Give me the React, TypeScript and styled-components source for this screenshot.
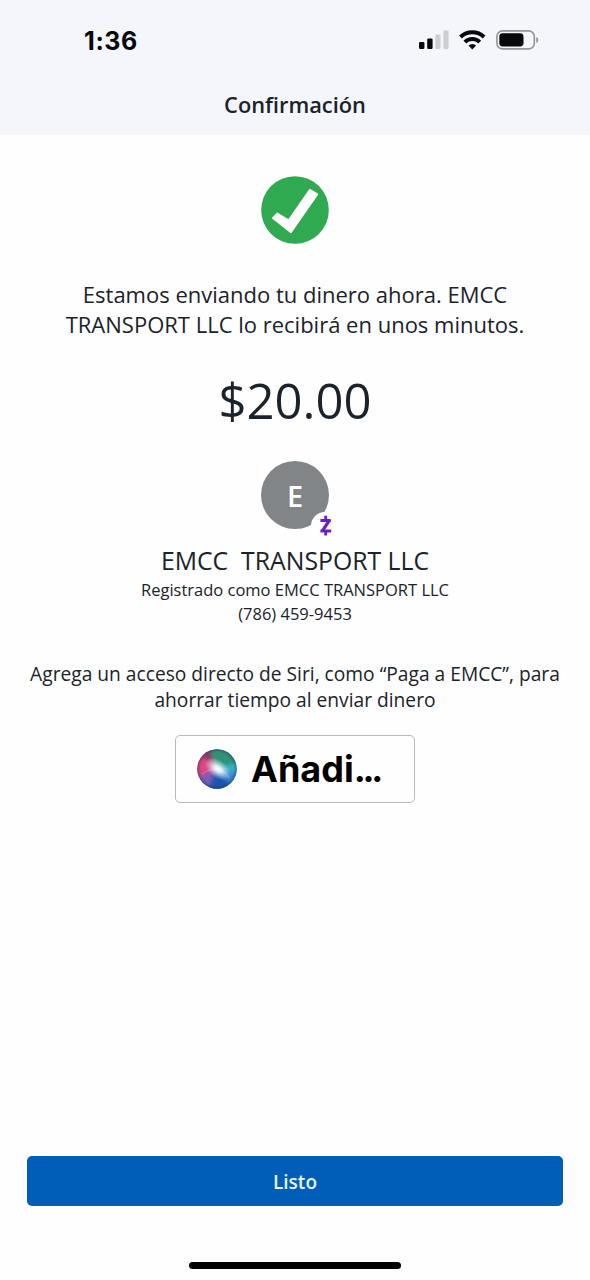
import styled, { createGlobalStyle } from "styled-components";

const GlobalStyle = createGlobalStyle`
	* {
		box-sizing: border-box;
	}
	body {
		margin: 0;
		background: #fff;
		font-family: "Open Sans", "Noto Sans", sans-serif;
		color: #1b2229;
	}
`;

const Screen = styled.div`
	display: flex;
	flex-direction: column;
	width: 590px;
	height: 1280px;
	background: #fefefe;
	overflow: hidden;
`;

const Header = styled.header`
	height: 135px;
	background: #f4f6fb;
`;

const StatusBar = styled.div`
	display: flex;
	align-items: center;
	justify-content: space-between;
	height: 80px;
	padding: 0 50px 0 84px;
`;

const Time = styled.span`
	padding-top: 1px;
	font-family: Inter, sans-serif;
	font-size: 25px;
	font-weight: 700;
	letter-spacing: 0.6px;
	color: #08090b;
`;

const Title = styled.h1`
	margin: 0;
	font-size: 21.8px;
	font-weight: 600;
	line-height: 49px;
	text-align: center;
`;

const Main = styled.main`
	flex: 1;
	display: flex;
	flex-direction: column;
	align-items: center;
	padding-top: 41px;
`;

// one centered block of copy, sized per use
const Text = styled.p<{
	$size: number;
	$line: number;
	$top?: number;
}>`
	margin: ${({ $top }) => $top || 0}px 0 0;
	font-size: ${({ $size }) => $size}px;
	line-height: ${({ $line }) => $line}px;
	text-align: center;
	white-space: pre;
`;

const Avatar = styled.div`
	position: relative;
	display: flex;
	align-items: center;
	justify-content: center;
	width: 68px;
	height: 68px;
	margin-top: 31px;
	border-radius: 50%;
	background: #818587;
	color: #fff;
	font-size: 29px;
	font-weight: 600;
`;

const ZelleBadge = styled.span`
	position: absolute;
	right: -10px;
	bottom: -11px;
	width: 28px;
	height: 28px;
	border-radius: 50%;
	background: #fefefe;

	svg {
		display: block;
	}
`;

const SiriButton = styled.button`
	display: flex;
	align-items: center;
	gap: 14px;
	width: 240px;
	height: 68px;
	margin-top: 22px;
	padding: 0 0 0 21px;
	border: 1.5px solid #b9b9ba;
	border-radius: 5px;
	background: #fefefe;
	color: #000;
	font-family: Inter, sans-serif;
	font-size: 36px;
	font-weight: 700;
`;

const Dots = styled.span`
	letter-spacing: -3.2px;
`;

const Footer = styled.footer`
	display: flex;
	flex-direction: column;
	align-items: center;
	padding: 0 27px 11px;
`;

const DoneButton = styled.button`
	width: 100%;
	height: 50px;
	padding: 2px 0 0;
	border: 0;
	border-radius: 5px;
	background: #005eb9;
	color: #e9f6ff;
	font-family: inherit;
	font-size: 19px;
	font-weight: 600;
`;

const HomeIndicator = styled.div`
	width: 212px;
	height: 7px;
	margin-top: 56px;
	border-radius: 4px;
	background: #000;
`;

const StatusIcons = () => (
	<svg width="122" height="24" viewBox="0 0 122 24">
		<rect x="1" y="14" width="5.4" height="7" rx="1.3" fill="#08090b" />
		<rect x="9.2" y="10.5" width="5.4" height="10.5" rx="1.3" fill="#08090b" />
		<rect x="17.3" y="6.5" width="5.2" height="14.5" rx="1.3" fill="#cdced2" />
		<rect x="25.4" y="2.5" width="5.2" height="18.5" rx="1.3" fill="#cdced2" />
		<g fill="none" stroke="#08090b" strokeWidth="4">
			<path d="M42.5 9a17 17 0 0 1 23.6 0" />
			<path d="M46.9 14.2a10.4 10.4 0 0 1 14.8 0" />
		</g>
		<path d="M54.3 21.6l-3.8-4a5.5 5.5 0 0 1 7.6 0z" fill="#08090b" />
		<rect
			x="78.9"
			y="2.9"
			width="37.4"
			height="18"
			rx="5.6"
			fill="none"
			stroke="#96989c"
			strokeWidth="1.7"
		/>
		<rect x="81.3" y="5.3" width="24.2" height="13.2" rx="3.4" fill="#08090b" />
		<path d="M118.2 9v6q2.2-1 2.2-3t-2.2-3z" fill="#96989c" />
	</svg>
);

const SuccessIcon = () => (
	<svg width="68" height="68" viewBox="0 0 68 68">
		<circle cx="34" cy="34" r="33.8" fill="#2faa50" />
		<path
			d="M11.8 42L16.3 37.4L27.6 44.2L48.8 13.8L56.4 18.2L30 56.4Z"
			fill="#fefefe"
			stroke="#fefefe"
			strokeWidth="1.6"
			strokeLinejoin="round"
		/>
	</svg>
);

const ZelleIcon = () => (
	<svg width="28" height="28" viewBox="0 0 28 28">
		<g fill="none" stroke="#6a1fc4">
			<path d="M9.4 8.4h10.4M9.4 19h10.8" strokeWidth="3" />
			<path d="M18.2 8.6L11.4 18.8" strokeWidth="3.2" />
			<path d="M14.7 3.7v4.5M14.7 19.2v4.4" strokeWidth="2.8" />
		</g>
	</svg>
);

const SiriIcon = () => (
	<svg width="40" height="40" viewBox="0 0 40 40">
		<defs>
			<clipPath id="orb">
				<circle cx="20" cy="20" r="19.7" />
			</clipPath>
			<radialGradient id="glow">
				<stop offset="0" stopColor="#fff" />
				<stop offset=".3" stopColor="#e8f6ff" stopOpacity=".9" />
				<stop offset="1" stopColor="#b8d8f0" stopOpacity="0" />
			</radialGradient>
			<radialGradient id="rim">
				<stop offset=".8" stopColor="#1c3358" stopOpacity="0" />
				<stop offset="1" stopColor="#1c3358" stopOpacity=".45" />
			</radialGradient>
			<filter id="soft" x="-30%" y="-30%" width="160%" height="160%">
				<feGaussianBlur stdDeviation="2.2" />
			</filter>
		</defs>
		<g clipPath="url(#orb)">
			<rect width="40" height="40" fill="#4a6fa8" />
			<g filter="url(#soft)">
				<path d="M20 20L8-4h38v20z" fill="#2e9479" />
				<path d="M20 20L46 12v14z" fill="#39b6c9" />
				<path d="M20 20l26 4-10 20z" fill="#3a86cf" />
				<path d="M20 20l20 24H4z" fill="#1d55ad" />
				<path d="M20 20L8 44-6 28z" fill="#7b5bb0" />
				<path d="M20 20L-6 30V4L10-2z" fill="#e0447f" />
				<path d="M16 13L4 8l10-10z" fill="#75405f" />
			</g>
			<ellipse
				cx="21"
				cy="20"
				rx="15"
				ry="9"
				transform="rotate(35 21 20)"
				fill="url(#glow)"
			/>
			<path
				d="M5 25q8-6 16-5 7 2 11 9"
				fill="none"
				stroke="#fff"
				strokeOpacity=".25"
			/>
			<circle cx="20" cy="20" r="20" fill="url(#rim)" />
		</g>
	</svg>
);

const App = () => (
	<>
		<GlobalStyle />
		<Screen>
			<Header>
				<StatusBar>
					<Time>1:36</Time>
					<StatusIcons />
				</StatusBar>
				<Title>Confirmación</Title>
			</Header>
			<Main>
				<SuccessIcon />
				<Text $size={22} $line={30} $top={35}>
					{"Estamos enviando tu dinero ahora. EMCC\nTRANSPORT LLC lo recibirá en unos minutos."}
				</Text>
				<Text $size={49} $line={60} $top={31}>
					$20.00
				</Text>
				<Avatar>
					E
					<ZelleBadge>
						<ZelleIcon />
					</ZelleBadge>
				</Avatar>
				<Text $size={24.8} $line={32} $top={15}>
					{"EMCC  TRANSPORT LLC"}
				</Text>
				<Text $size={16.5} $line={24} $top={2}>
					{"Registrado como EMCC TRANSPORT LLC\n(786) 459-9453"}
				</Text>
				<Text $size={19.2} $line={26} $top={35}>
					{"Agrega un acceso directo de Siri, como “Paga a EMCC”, para\nahorrar tiempo al enviar dinero"}
				</Text>
				<SiriButton>
					<SiriIcon />
					<span>
						Añadi<Dots>...</Dots>
					</span>
				</SiriButton>
			</Main>
			<Footer>
				<DoneButton>Listo</DoneButton>
				<HomeIndicator />
			</Footer>
		</Screen>
	</>
);

export default App;
